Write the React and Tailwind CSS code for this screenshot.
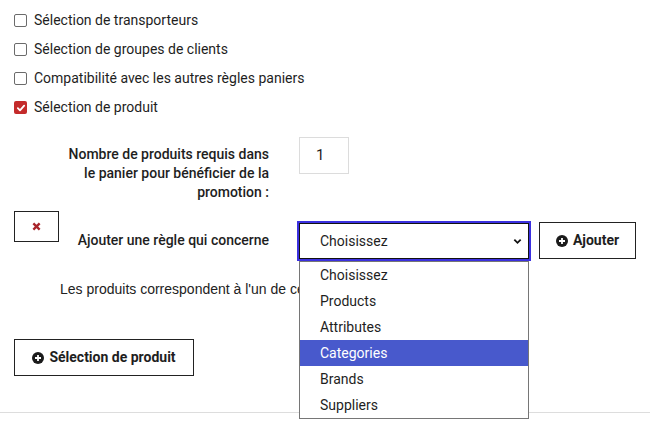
import React from "react";

const PlusCircle = ({ className = "" }) => (
  <svg viewBox="0 0 16 16" className={className} aria-hidden="true">
    <circle cx="8" cy="8" r="8" fill="#1b1b1b" />
    <path d="M8 4v8M4 8h8" stroke="#fff" strokeWidth="2.4" strokeLinecap="butt" />
  </svg>
);

const Box = ({ checked, label }) => (
  <div className="flex h-[29px] items-center">
    {checked ? (
      <span className="flex h-[13px] w-[13px] items-center justify-center rounded-[2px] bg-[#c42b2b]">
        <svg viewBox="0 0 12 12" className="h-[10px] w-[10px]">
          <path d="M2.2 6.2l2.6 2.6 5-5.6" fill="none" stroke="#fff" strokeWidth="2.2" strokeLinecap="round" strokeLinejoin="round" />
        </svg>
      </span>
    ) : (
      <span className="h-[13px] w-[13px] rounded-[2px] border border-[#6b6b6b] bg-white" />
    )}
    <span className="ml-[7px] text-[14px] text-[#1e1e1e]">{label}</span>
  </div>
);

export default function App() {
  return (
    <div
      className="relative h-[426px] w-[650px] overflow-hidden bg-white text-[#1e1e1e]"
      style={{ fontFamily: "Roboto, 'Noto Sans', sans-serif" }}
    >
      <div className="px-[14px] pt-[6px]">
        <Box label="Sélection de transporteurs" />
        <Box label="Sélection de groupes de clients" />
        <Box label="Compatibilité avec les autres règles paniers" />
        <Box checked label="Sélection de produit" />

        <div className="mt-[15px] flex items-start">
          <div className="w-[255px] pt-[8px] text-right text-[14px] font-medium leading-[19px]">
            Nombre de produits requis dans
            <br />
            le panier pour bénéficier de la
            <br />
            promotion :
          </div>
          <div className="ml-[30px] flex h-[37px] w-[50px] items-center border border-[#dcdcdc] pl-[16px] text-[15px]">
            1
          </div>
        </div>

        <div className="mt-[9px] flex items-start">
          <div className="flex w-[255px] items-start justify-between">
            <button className="flex h-[31px] w-[45px] items-center justify-center border border-[#222] bg-white">
              <svg viewBox="0 0 10 10" className="h-[9px] w-[9px]">
                <path d="M1.5 1.5l7 7M8.5 1.5l-7 7" stroke="#a8242a" strokeWidth="2.6" strokeLinecap="butt" />
              </svg>
            </button>
            <span className="mt-[20px] whitespace-nowrap text-[14px] font-medium leading-[19px]">
              Ajouter une règle qui concerne
            </span>
          </div>
          <div className="relative ml-[30px] mt-[12px]">
            <div className="flex h-[36px] w-[230px] items-center justify-between border border-[#111] bg-white pl-[20px] pr-[6px] text-[14px] outline-2 outline-[#3b30e0]">
              <span>Choisissez</span>
              <svg viewBox="0 0 10 10" className="h-[9px] w-[9px]">
                <path d="M1.5 3l3.5 3.5L8.5 3" fill="none" stroke="#111" strokeWidth="2" />
              </svg>
            </div>
            <ul className="absolute left-0 top-[38px] z-10 w-[230px] border border-[#767676] bg-white text-[14px]">
              {["Choisissez", "Products", "Attributes", "Categories", "Brands", "Suppliers"].map((o) => (
                <li
                  key={o}
                  className={
                    "flex h-[26px] items-center pl-[20px] " +
                    (o === "Categories" ? "bg-[#4859cc] text-white" : "")
                  }
                >
                  {o}
                </li>
              ))}
            </ul>
          </div>
          <button className="ml-[10px] mt-[11px] flex h-[37px] w-[97px] items-center justify-center gap-[5px] border border-[#222] bg-white text-[14px] font-bold">
            <PlusCircle className="h-[12px] w-[12px]" />
            Ajouter
          </button>
        </div>

        <div
          className="ml-[46px] mt-[21px] w-[239px] overflow-hidden whitespace-nowrap text-[14px] leading-[19px] text-[#222]"
          style={{ fontFamily: "'Liberation Sans', Arial, sans-serif" }}
        >
          Les produits correspondent à l'un de ces critères :
        </div>

        <button className="mt-[40px] flex h-[37px] w-[180px] items-center justify-center gap-[5px] border border-[#222] bg-white text-[14px] font-bold">
          <PlusCircle className="h-[12px] w-[12px]" />
          Sélection de produit
        </button>
      </div>
      <div className="mt-[36px] h-px w-full bg-[#dddddd]" />
    </div>
  );
}
